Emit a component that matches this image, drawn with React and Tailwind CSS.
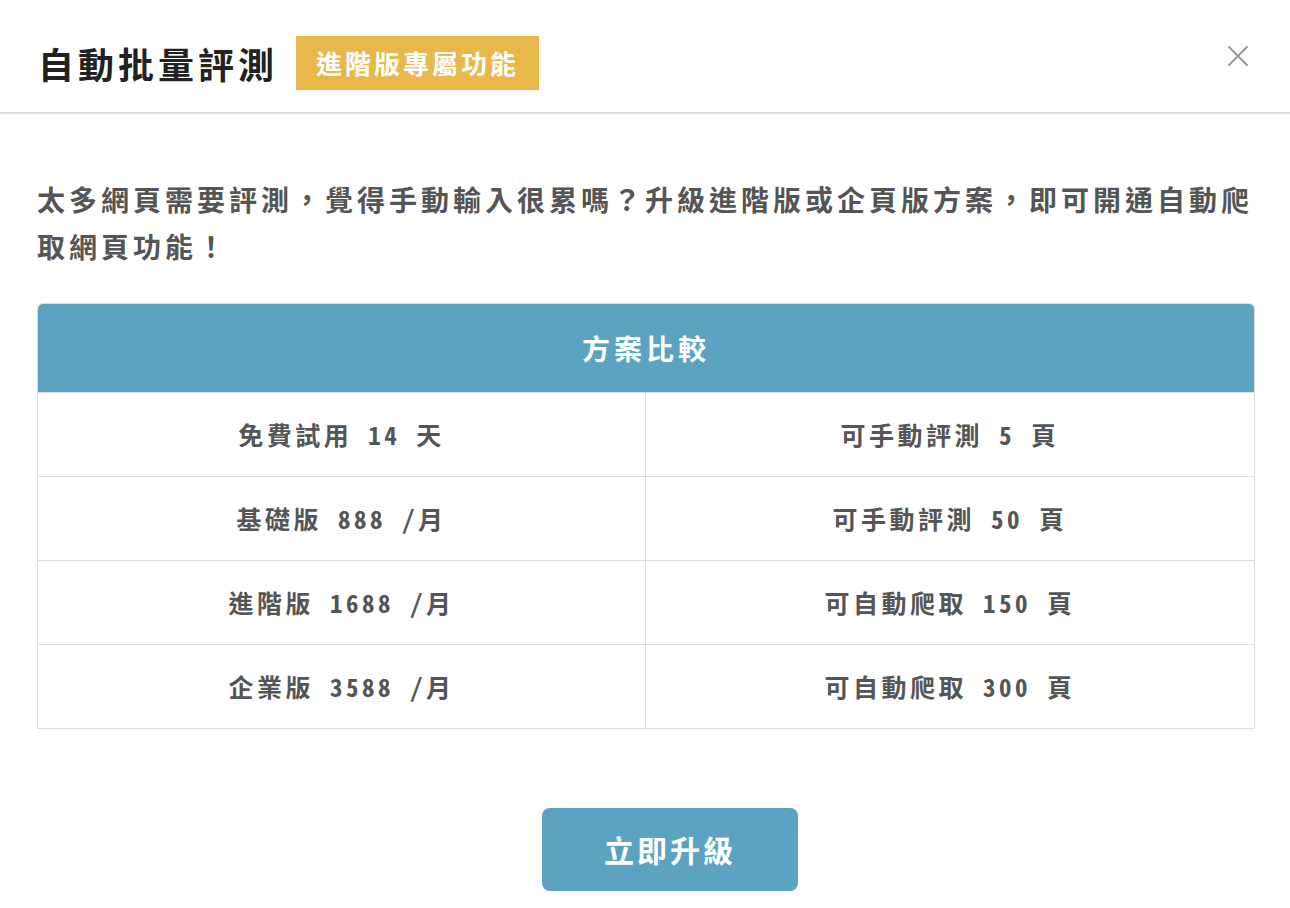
import React from "react";

const plans = [
  { name: "免費試用 14 天", quota: "可手動評測 5 頁" },
  { name: "基礎版 888 /月", quota: "可手動評測 50 頁" },
  { name: "進階版 1688 /月", quota: "可自動爬取 150 頁" },
  { name: "企業版 3588 /月", quota: "可自動爬取 300 頁" },
];

const sans = "font-['Noto_Sans_CJK_TC','Noto_Sans',sans-serif]";
const mono = "font-['Noto_Sans_Mono_CJK_TC','Liberation_Mono','Noto_Sans_CJK_TC',monospace]";

const App = () => {
  return (
    <div className={`w-[1290px] h-[908px] bg-white ${sans} overflow-hidden`}>
      {/* header */}
      <div className="h-[114px] pt-[13px] border-b-2 border-[#dedede] flex items-center pl-[38px] pr-[40px]">
        <h1 className="text-[36px] font-bold text-[#222] tracking-[4px]">自動批量評測</h1>
        <span className="ml-[18px] h-[54px] px-[20px] flex items-center bg-[#e8b84a] text-white text-[26px] font-bold tracking-[3px]">
          進階版專屬功能
        </span>
        <button className="ml-auto mb-[14px] text-[#999]">
          <svg width="24" height="24" viewBox="0 0 24 24" fill="none" stroke="currentColor" strokeWidth="2" strokeLinecap="round">
            <path d="M3 3l18 18M21 3L3 21" />
          </svg>
        </button>
      </div>

      {/* body */}
      <div className="pl-[37px] pr-[35px] pt-[62px]">
        <p className="text-[28px] leading-[47px] font-bold text-[#555] tracking-[4px]">
          太多網頁需要評測，覺得手動輸入很累嗎？升級進階版或企頁版方案，即可開通自動爬取網頁功能！
        </p>

        <div className="mt-[33px] border border-[#dcdcdc] rounded-t-[6px] overflow-hidden">
          <div className="h-[88px] bg-[#5ba3c1] flex items-center justify-center text-white text-[28px] font-bold tracking-[4px]">
            方案比較
          </div>
          {plans.map((p) => (
            <div key={p.name} className="grid grid-cols-2 border-t border-[#dcdcdc]">
              <div className={`h-[83px] flex items-center justify-center border-r border-[#dcdcdc] text-[25px] font-bold text-[#555] tracking-[3.5px] ${mono}`}>
                {p.name}
              </div>
              <div className={`h-[83px] flex items-center justify-center text-[25px] font-bold text-[#555] tracking-[3.5px] ${mono}`}>
                {p.quota}
              </div>
            </div>
          ))}
        </div>

        <div className="mt-[79px] flex justify-center pl-[48px]">
          <button className="w-[256px] h-[83px] rounded-[8px] bg-[#5ba3c1] text-white text-[30px] font-bold tracking-[3px]">
            立即升級
          </button>
        </div>
      </div>
    </div>
  );
};

export default App;
